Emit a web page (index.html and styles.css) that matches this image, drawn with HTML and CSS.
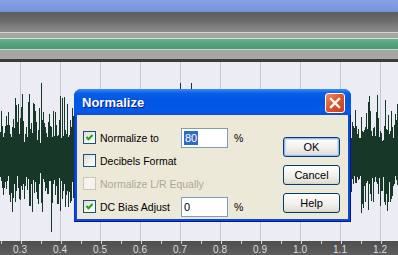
FILE: index.html
```html
<!DOCTYPE html>
<html lang="en">
<head>
    <meta charset="UTF-8">
    <title>Normalize</title>
    <link rel="stylesheet" href="styles.css">
</head>
<body>
    <div class="editor">
        <div class="top-strip"></div>
        <div class="toolbar"></div>
        <div class="overview">
            <div class="overview-bar"></div>
        </div>
        <div class="wave-view">
            <svg id="wave" width="398" height="179"></svg>
        </div>
        <div class="ruler">
            <div class="ticks"></div>
            <div class="labels">
                <span>0.3</span><span>0.4</span><span>0.5</span><span>0.6</span><span>0.7</span>
                <span>0.8</span><span>0.9</span><span>1.0</span><span>1.1</span><span>1.2</span>
            </div>
        </div>

        <div class="dialog">
            <div class="dialog-title">
                <span>Normalize</span>
                <div class="close-btn">
                    <svg width="20" height="20" viewBox="0 0 20 20">
                        <path d="M6 6L14 14M14 6L6 14" stroke="#fff" stroke-width="2.4" stroke-linecap="square"/>
                    </svg>
                </div>
            </div>
            <div class="dialog-body">
                <div class="options">
                    <div class="row">
                        <label class="check-label">
                            <span class="cb checked"><svg width="11" height="11" viewBox="0 0 11 11"><path d="M2.5 5L4.5 7.2L8.5 3" stroke="#21a121" stroke-width="2" fill="none"/></svg></span>
                            Normalize to
                        </label>
                        <div class="field"><span class="sel">80</span></div>
                        <span class="unit">%</span>
                    </div>
                    <div class="row">
                        <label class="check-label">
                            <span class="cb"></span>
                            Decibels Format
                        </label>
                    </div>
                    <div class="row">
                        <label class="check-label disabled">
                            <span class="cb"></span>
                            Normalize L/R Equally
                        </label>
                    </div>
                    <div class="row">
                        <label class="check-label">
                            <span class="cb checked"><svg width="11" height="11" viewBox="0 0 11 11"><path d="M2.5 5L4.5 7.2L8.5 3" stroke="#21a121" stroke-width="2" fill="none"/></svg></span>
                            DC Bias Adjust
                        </label>
                        <div class="field">0</div>
                        <span class="unit">%</span>
                    </div>
                </div>
                <div class="buttons">
                    <button class="btn default">OK</button>
                    <button class="btn">Cancel</button>
                    <button class="btn">Help</button>
                </div>
            </div>
        </div>
    </div>

    <script src="script.js"></script>
</body>
</html>
```

FILE: styles.css
```css
body {
    margin: 0;
    overflow: hidden;
    font-family: "Liberation Sans", Arial, sans-serif;
}

.editor {
    position: relative;
    width: 398px;
    height: 255px;
    overflow: hidden;
    background-color: #ececf4;
}

.top-strip {
    height: 12px;
    background: linear-gradient(#86a3e6, #7493dc);
}

.toolbar {
    height: 20px;
    background: linear-gradient(#5e5e5e, #6a6a6a 40%, #8c8c8c);
}

.overview {
    border-top: 1px solid #d4d4d4;
    padding: 5px 0 9px;
    background-color: #a8a6a2;
    border-bottom: 3px solid #3a3a3a;
}

.overview-bar {
    height: 10px;
    border-top: 1px solid #d2e6d9;
    border-bottom: 1px solid #c4dccd;
    background: linear-gradient(#67b08d, #55a27e 50%, #4d9775);
}

.wave-view {
    height: 179px;
    background-color: #ececf4;
    background-image: linear-gradient(to right, #c6c6ce 1px, transparent 1px);
    background-size: 40px 100%;
    background-position: 20px 0;
}

.wave-view svg {
    display: block;
}

.ruler {
    height: 20px;
    background: linear-gradient(#4e4e4e, #646464);
}

.ticks {
    height: 3px;
    background-image: linear-gradient(to right, #cfcfcf 1px, transparent 1px);
    background-size: 20px 100%;
    background-position: 1px 0;
}

.labels {
    display: flex;
    color: #dcdcdc;
    font-size: 10px;
    line-height: 12px;
}

.labels span {
    width: 40px;
    flex: none;
    text-align: center;
}

/* dialog window */
.dialog {
    position: absolute;
    left: 74px;
    top: 89px;
    width: 277px;
    height: 133px;
    display: flex;
    flex-direction: column;
    background-color: #0a4ad8;
    border-radius: 8px 8px 0 0;
    box-shadow: inset -1px -1px 0 #00138c, inset 1px 0 0 #0831d9;
}

.dialog-title {
    position: relative;
    height: 26px;
    flex: none;
    display: flex;
    align-items: center;
    padding-left: 8px;
    border-radius: 7px 7px 0 0;
    background: linear-gradient(#3c8ff7, #0a5fe8 4px, #0056e6 45%, #0559e6 85%, #0a4ed8);
    color: white;
    font-weight: bold;
    font-size: 13px;
    text-shadow: 1px 1px 0 #0a1e8a;
}

.close-btn {
    position: absolute;
    right: 6px;
    top: 4px;
    width: 20px;
    height: 20px;
    box-sizing: border-box;
    border: 1px solid #fff;
    border-radius: 3px;
    background: linear-gradient(135deg, #f08e6e, #e1552c 45%, #c7401a);
}

.close-btn svg {
    display: block;
    margin: -1px;
}

.dialog-body {
    flex: 1;
    display: flex;
    margin: 0 3px 3px;
    padding: 11px 8px 0 6px;
    background-color: #ece9d8;
    font-size: 10.5px;
    color: #000;
}

.row {
    height: 23px;
    display: flex;
    align-items: center;
}

.check-label {
    width: 98px;
    flex: none;
    display: flex;
    align-items: center;
    gap: 4px;
    white-space: nowrap;
}

.check-label.disabled {
    color: #aca899;
}

.cb {
    width: 13px;
    height: 13px;
    flex: none;
    box-sizing: border-box;
    border: 1px solid #1c5180;
    background: linear-gradient(135deg, #dcdcd5, #f4f4f0 60%, #fff);
}

.cb svg {
    display: block;
}

.disabled .cb {
    border-color: #cac8bb;
    background: #f5f4ee;
}

.field {
    width: 47px;
    height: 20px;
    box-sizing: border-box;
    border: 1px solid #7f9db9;
    background-color: white;
    padding-left: 2px;
    line-height: 18px;
    font-size: 11px;
}

.sel {
    background-color: #316ac5;
    color: white;
    padding: 1px 1px;
}

.unit {
    margin-left: 6px;
}

.buttons {
    margin-left: auto;
    margin-top: 11px;
    display: flex;
    flex-direction: column;
    gap: 8px;
}

.btn {
    width: 57px;
    height: 20px;
    padding: 0;
    border: 1px solid #003c74;
    border-radius: 3px;
    background: linear-gradient(#ffffff, #f3f2ee 50%, #e3e0d6 90%, #d6d0c5);
    font-family: "Liberation Sans", Arial, sans-serif;
    font-size: 11px;
    color: #000;
}

.btn.default {
    box-shadow: inset 0 0 0 1px #98b8ee, inset 0 0 0 2px #cddcf6;
}
```

FILE: script.js
```js
// draw the waveform as one path of vertical strokes
const svg = document.getElementById('wave');
let seed = 11;
function rnd() {
    seed = (seed * 16807) % 2147483647;
    return seed / 2147483647;
}

const mid = 96;
let d = '';
for (let x = 0; x < 398; x++) {
    const core = 15 + rnd() * 10;
    let up = core + Math.pow(rnd(), 1.6) * 40;
    let down = core + Math.pow(rnd(), 1.8) * 36;
    if (x === 41) up = 75;
    if (x === 51) down = 74;
    if (x === 180 || x === 191) up = 75;
    d += 'M' + (x + 0.5) + ' ' + Math.round(mid - up) + 'V' + Math.round(mid + down);
}

const path = document.createElementNS('http://www.w3.org/2000/svg', 'path');
path.setAttribute('d', d);
path.setAttribute('stroke', '#173828');
path.setAttribute('stroke-width', '1');
path.setAttribute('shape-rendering', 'crispEdges');
svg.appendChild(path);
```
